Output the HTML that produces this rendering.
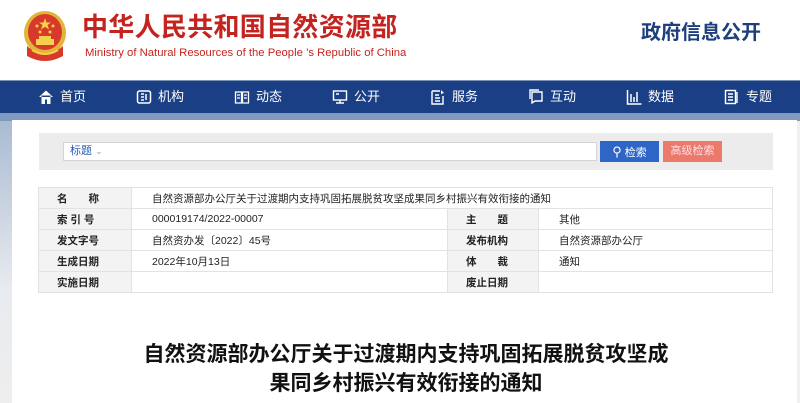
<!DOCTYPE html>
<html><head><meta charset="utf-8"><style>
*{margin:0;padding:0;box-sizing:border-box}
body{width:800px;height:403px;overflow:hidden;background:#f0f0f0;font-family:"Liberation Sans","Noto Sans CJK SC",sans-serif;position:relative}
.hdr{position:absolute;left:0;top:0;width:800px;height:80px;background:#fff}
.nav{position:absolute;left:0;top:80px;width:800px;height:33px;background:#1b3f85;border-top:1px solid #7b93b8}
.band{position:absolute;left:0;top:113px;width:800px;height:8px;background:#7f9abd}
.gut{position:absolute;left:0;top:121px;width:12px;height:282px;background:linear-gradient(#a9bbd2,#e8ebef 60%,#eeeeee)}
.main{position:absolute;left:12px;top:120px;width:785px;height:283px;background:#fff}
.ni{position:absolute;top:88px;color:#fff;font-size:13px;line-height:18px;display:flex;align-items:center;gap:6px}
.ni svg{width:16px;height:16px}
.panel{position:absolute;left:39px;top:133px;width:734px;height:37px;background:#ececec}
.inp{position:absolute;left:63px;top:142px;width:534px;height:19px;background:#fff;border:1px solid #d4d4d4;font-size:11px;color:#2a5cb5;line-height:17px;padding-left:6px}
.b1{position:absolute;left:600px;top:141px;width:59px;height:21px;background:#2f66c6;color:#fff;font-size:11px;line-height:21px;text-align:center}
.b2{position:absolute;left:663px;top:141px;width:59px;height:21px;background:#ec7a6b;color:#fde;font-size:11px;line-height:21px;text-align:center}
table{position:absolute;left:38px;top:187px;width:735px;border-collapse:collapse;font-size:10.5px;color:#222}
td{border:1px solid #e2e2e2;height:21px;padding:0 0 0 20px}
td.l{background:#f3f3f3;font-weight:bold;width:93px;padding-left:18px}
td.l2{background:#f3f3f3;font-weight:bold;width:91px;padding-left:18px}
.t{position:absolute;left:6px;width:800px;text-align:center;font-size:21px;font-weight:bold;color:#111}
</style></head><body>
<div class="hdr"></div>
<svg style="position:absolute;left:22px;top:10px" width="46" height="52" viewBox="0 0 46 52">
<ellipse cx="23" cy="23" rx="21" ry="22" fill="#e2b43a"/>
<ellipse cx="23" cy="22" rx="17" ry="18" fill="#d73a2a"/>
<polygon points="23,8 24.5,12.5 29,12.5 25.5,15 27,19.5 23,16.8 19,19.5 20.5,15 17,12.5 21.5,12.5" fill="#f5d04c"/>
<circle cx="15" cy="16" r="1.5" fill="#f5d04c"/><circle cx="31" cy="16" r="1.5" fill="#f5d04c"/>
<circle cx="18" cy="22" r="1.5" fill="#f5d04c"/><circle cx="28" cy="22" r="1.5" fill="#f5d04c"/>
<rect x="14" y="29" width="18" height="6" fill="#f5d04c"/><rect x="17" y="26" width="12" height="3" fill="#f5d04c"/>
<path d="M5 36 Q23 52 41 36 L41 46 Q23 56 5 46Z" fill="#d73a2a"/>
<path d="M10 40 Q23 48 36 40" stroke="#f5d04c" stroke-width="2" fill="none"/>
</svg>
<div style="position:absolute;left:82px;top:12px;font-size:26px;font-weight:bold;color:#c4241f;line-height:30px;letter-spacing:0.3px">中华人民共和国自然资源部</div>
<div style="position:absolute;left:85px;top:46px;font-size:11.3px;color:#c4241f;line-height:14px">Ministry of Natural Resources of the People ’s Republic of China</div>
<div style="position:absolute;left:641px;top:20px;font-size:20px;font-weight:bold;color:#1d3f7e;line-height:26px">政府信息公开</div>
<div class="nav"></div>
<div class="ni" style="left:38px"><svg viewBox="0 0 16 16"><path d="M1 8L8 1.5 15 8M3.5 6.5V15H7V10.5H9V15H12.5V6.5" fill="#fff"/></svg>首页</div>
<div class="ni" style="left:136px"><svg viewBox="0 0 16 16"><rect x="1.5" y="2" width="13" height="12" rx="2" fill="none" stroke="#fff" stroke-width="1.5"/><path d="M5 5h3M5 8h3M5 11h3M10 5v6" stroke="#fff" stroke-width="1.5"/></svg>机构</div>
<div class="ni" style="left:234px"><svg viewBox="0 0 16 16"><path d="M1.5 3h6v11h-6zM8.5 3h6v11h-6zM3 6h3M3 9h3M10 6h3M10 9h3" fill="none" stroke="#fff" stroke-width="1.3"/></svg>动态</div>
<div class="ni" style="left:332px"><svg viewBox="0 0 16 16"><rect x="1.5" y="2" width="13" height="9" fill="none" stroke="#fff" stroke-width="1.4"/><path d="M8 11v3M4 14h8M4 5h3" stroke="#fff" stroke-width="1.4"/></svg>公开</div>
<div class="ni" style="left:430px"><svg viewBox="0 0 16 16"><path d="M2 2h8M2 2v13h11V7M5 6h4M5 9h5M5 12h5" fill="none" stroke="#fff" stroke-width="1.4"/><path d="M11 1l3 3-3 1z" fill="#fff"/></svg>服务</div>
<div class="ni" style="left:528px"><svg viewBox="0 0 16 16"><path d="M4 3h10v9H7l-3 2zM2 10V1h9" fill="none" stroke="#fff" stroke-width="1.4"/></svg>互动</div>
<div class="ni" style="left:626px"><svg viewBox="0 0 16 16"><path d="M1.5 1v14h14M5 13V5M8 13V8M11 13V3" fill="none" stroke="#fff" stroke-width="1.5"/></svg>数据</div>
<div class="ni" style="left:724px"><svg viewBox="0 0 16 16"><rect x="1.5" y="1.5" width="10" height="13" fill="none" stroke="#fff" stroke-width="1.4"/><path d="M13 3v11M4 5h5M4 8h5M4 11h5" stroke="#fff" stroke-width="1.4"/></svg>专题</div>
<div class="band"></div>
<div class="gut"></div>
<div class="main"></div>
<div class="panel"></div>
<div class="inp">标题 <span style="color:#999;font-size:9px">⌄</span></div>
<div class="b1"><span style="font-size:13px">⚲</span> 检索</div>
<div class="b2">高级检索</div>
<table>
<tr><td class="l">名　　称</td><td colspan="3">自然资源部办公厅关于过渡期内支持巩固拓展脱贫攻坚成果同乡村振兴有效衔接的通知</td></tr>
<tr><td class="l">索 引 号</td><td style="width:316px">000019174/2022-00007</td><td class="l2">主　　题</td><td>其他</td></tr>
<tr><td class="l">发文字号</td><td>自然资办发〔2022〕45号</td><td class="l2">发布机构</td><td>自然资源部办公厅</td></tr>
<tr><td class="l">生成日期</td><td>2022年10月13日</td><td class="l2">体　　裁</td><td>通知</td></tr>
<tr><td class="l">实施日期</td><td></td><td class="l2">废止日期</td><td></td></tr>
</table>
<div class="t" style="top:338px">自然资源部办公厅关于过渡期内支持巩固拓展脱贫攻坚成</div>
<div class="t" style="top:367px">果同乡村振兴有效衔接的通知</div>
</body></html>
